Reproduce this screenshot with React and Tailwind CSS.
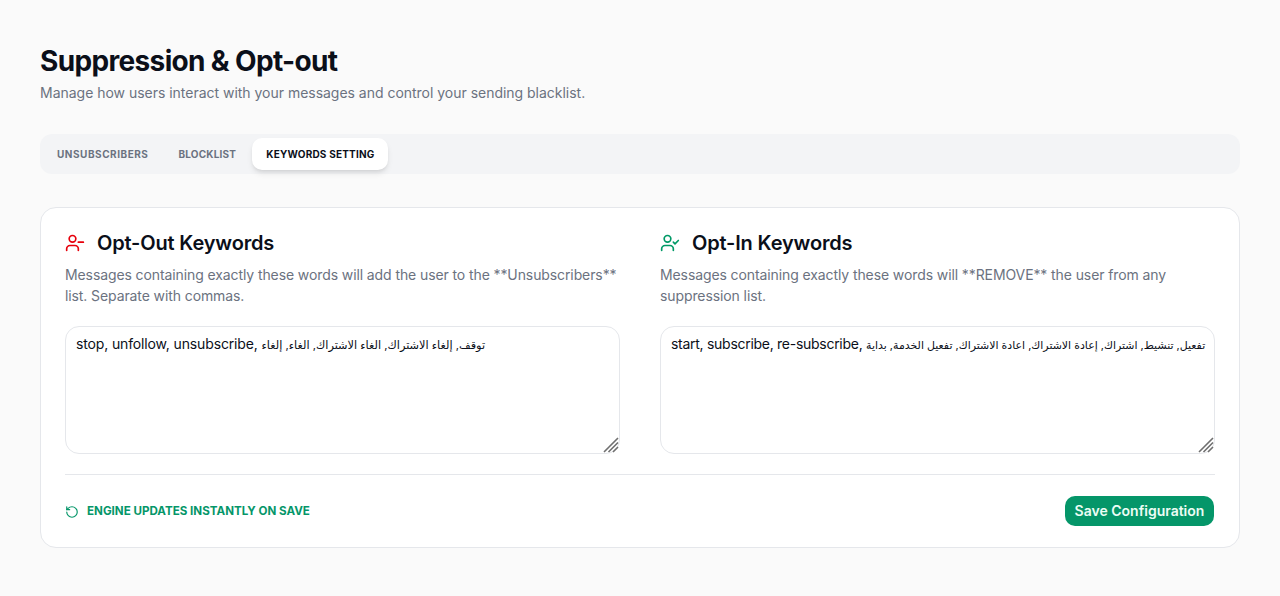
import React from "react";
import { UserMinus, UserCheck, RotateCcw } from "lucide-react";

function ResizeGrip() {
  return (
    <svg width="16" height="16" viewBox="0 0 16 16" fill="none" stroke="#707070" strokeWidth="1.6" className="absolute right-0 bottom-0">
      <path d="M1 15 15 1M5.5 15 15 5.5M10 15l5-5" />
    </svg>
  );
}

function Column({ icon, title, desc, latin, arabic, arabicClass, latinClass }) {
  return (
    <div className="flex flex-col">
      <div className="flex items-center gap-3 h-7">
        {icon}
        <h3 className="text-xl font-semibold text-[#0b0f19] tracking-[-0.16px]">{title}</h3>
      </div>
      <p className="mt-[7px] text-[14px] leading-[21px] tracking-[-0.1px] text-[#6b7280]">{desc}</p>
      <div className="relative mt-[20px] h-[128px] w-full rounded-[14px] border border-[#e5e7eb] bg-white px-[10px] py-[7px] text-[14px] leading-[20px] whitespace-nowrap text-[#0b0f19]">
        <span className={latinClass}>{latin} </span>
        <span className={arabicClass}>{arabic}</span>
        <ResizeGrip />
      </div>
    </div>
  );
}

export default function App() {
  return (
    <div className="min-h-[596px] bg-[#fafafa] px-10 pt-[43px] font-['Inter','DejaVu_Sans',sans-serif]">
      <h1 className="text-[28px] leading-[36px] font-bold tracking-[-0.65px] text-[#0b0f19]">Suppression &amp; Opt-out</h1>
      <p className="mt-[4px] text-[14px] leading-[20px] tracking-[-0.02px] text-[#6b7280]">Manage how users interact with your messages and control your sending blacklist.</p>

      <div className="mt-[31px] flex h-10 w-full items-center gap-0.5 rounded-xl bg-[#f3f4f6] pl-[3px] text-[10px] font-bold tracking-[0.2px]">
        <button className="h-8 px-[14px] tracking-[0.53px] uppercase text-[#6b7280]">Unsubscribers</button>
        <button className="h-8 px-[14px] uppercase text-[#6b7280]">Blocklist</button>
        <button className="h-8 rounded-[10px] bg-white px-[14px] uppercase text-[#0b0f19] shadow-md">Keywords Setting</button>
      </div>

      <div className="mt-[33px] h-[341px] rounded-2xl border border-[#e5e7eb] bg-white px-6 pt-[21px]">
        <div className="grid grid-cols-2 gap-10">
          <Column
            icon={<UserMinus size={20} className="shrink-0 text-red-600" />}
            title="Opt-Out Keywords"
            desc="Messages containing exactly these words will add the user to the **Unsubscribers** list. Separate with commas."
            latin="stop, unfollow, unsubscribe,"
            latinClass="tracking-[-0.14px]"
            arabic="توقف, إلغاء الاشتراك, الغاء الاشتراك, الغاء, إلغاء"
            arabicClass="text-[11.3px]"
          />
          <Column
            icon={<UserCheck size={20} className="shrink-0 text-emerald-600" />}
            title="Opt-In Keywords"
            desc="Messages containing exactly these words will **REMOVE** the user from any suppression list."
            latin="start, subscribe, re-subscribe,"
            latinClass="tracking-[-0.28px]"
            arabic="تفعيل, تنشيط, اشتراك, إعادة الاشتراك, اعادة الاشتراك, تفعيل الخدمة, بداية"
            arabicClass="text-[10.95px]"
          />
        </div>
        <div className="mt-5 flex items-center justify-between border-t border-[#e5e7eb] pt-[21px]">
          <div className="mt-[2px] flex items-center gap-2 text-[#059669]">
            <RotateCcw size={14} className="shrink-0" />
            <span className="text-[11.6px] font-bold uppercase">Engine updates instantly on save</span>
          </div>
          <button className="mr-px h-[30px] w-[149px] rounded-[10px] bg-[#059669] pb-[2px] text-[14px] font-semibold text-[#ecfdf5]">Save Configuration</button>
        </div>
      </div>
    </div>
  );
}
